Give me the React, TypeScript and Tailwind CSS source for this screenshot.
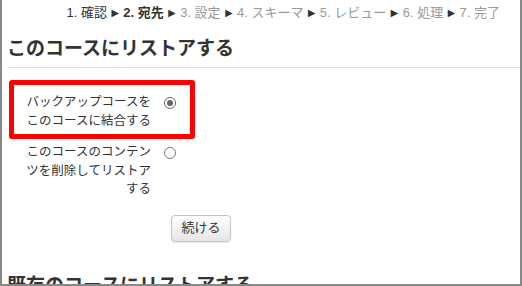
import React from 'react';

const STEPS = [
  { label: '1. 確認', state: 'done' },
  { label: '2. 宛先', state: 'current' },
  { label: '3. 設定', state: 'todo' },
  { label: '4. スキーマ', state: 'todo' },
  { label: '5. レビュー', state: 'todo' },
  { label: '6. 処理', state: 'todo' },
  { label: '7. 完了', state: 'todo' },
];

const font = { fontFamily: '"Liberation Sans", "Noto Sans CJK JP", sans-serif' };

function Radio({ checked }: { checked?: boolean }) {
  return (
    <span
      className={`flex h-[12px] w-[12px] shrink-0 items-center justify-center rounded-full border bg-white ${
        checked ? 'border-[#666]' : 'border-[#777]'
      }`}
    >
      {checked && <span className="h-[6px] w-[6px] rounded-full bg-[#666]" />}
    </span>
  );
}

export default function App() {
  return (
    <div
      className="h-[286px] w-[522px] overflow-hidden border-x-2 border-b-2 border-[#888] bg-white text-[#333]"
      style={font}
    >
      <div className="flex items-center justify-end pr-[20px] pt-[4px] text-[13px] leading-[18px]">
        {STEPS.map((s, i) => (
          <span key={s.label} className="flex items-center whitespace-pre">
            <span
              className={
                s.state === 'current' ? 'font-bold text-[#333]' : s.state === 'done' ? 'text-[#333]' : 'text-[#999]'
              }
            >
              {s.label}
            </span>
            {i < STEPS.length - 1 && <span className="mx-[2px] text-[12.5px] text-[#333]">►</span>}
          </span>
        ))}
      </div>

      <h2 className="ml-[5px] mt-[15px] text-[19px] font-bold leading-[24px]">このコースにリストアする</h2>
      <div className="ml-[5px] mt-[6px] h-px bg-[#e3e3e3]" />

      <div className="ml-[7px] mt-[12px] text-[12.5px] leading-[19px]">
        <div className="flex w-[186px] items-start rounded-[3px] border-[5px] border-[#f00] pb-[3px] pl-[11px] pt-[8px]">
          <div className="w-[126px] text-right">バックアップコースをこのコースに結合する</div>
          <div className="ml-[13px] mt-[4px]">
            <Radio checked />
          </div>
        </div>
        <div className="mt-[4px] flex items-start pl-[16px]">
          <div className="w-[126px] text-right leading-[18.5px]">このコースのコンテンツを削除してリストアする</div>
          <div className="ml-[13px] mt-[4px]">
            <Radio />
          </div>
        </div>
      </div>

      <button className="ml-[169px] mt-[16px] h-[27px] w-[60px] rounded-[4px] border border-[#c4c4c4] bg-gradient-to-b from-white to-[#e6e6e6] text-[13px] text-[#333] shadow-[0_1px_1px_rgba(0,0,0,0.08)]">
        続ける
      </button>

      <h2 className="ml-[5px] mt-[32px] text-[19px] font-bold leading-[24px]">既存のコースにリストアする</h2>
    </div>
  );
}
